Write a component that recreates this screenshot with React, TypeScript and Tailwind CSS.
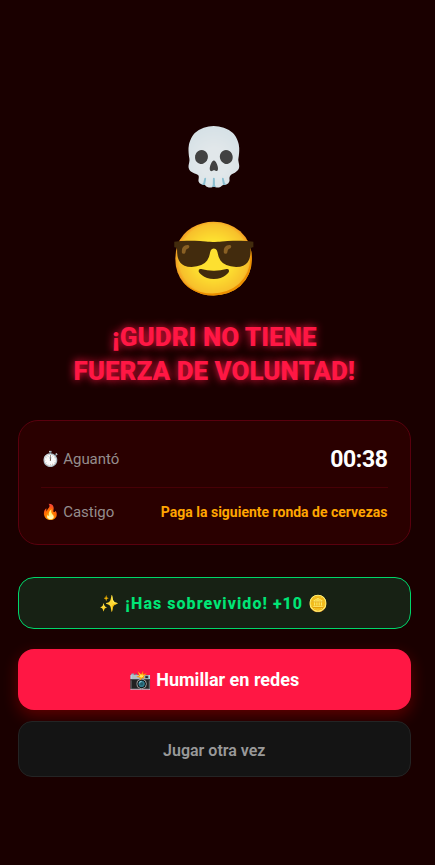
const Stats = () => (
  <section className="h-[125px] w-full rounded-[20px] border border-[#5a000e] bg-[#2a0000] px-[22.5px] py-[15px]">
    <div className="flex h-[52px] items-center justify-between border-b border-[#480006] pb-[5px]">
      <span className="text-[15px] leading-5 tracking-[-0.05px] text-[#958d8d]">⏱️ Aguantó</span>
      <span className="pt-px text-[23px] leading-7 font-bold tracking-[-0.4px]">00:38</span>
    </div>
    <div className="flex h-[48px] items-center justify-between">
      <span className="text-[15px] leading-5 tracking-[-0.05px] text-[#958d8d]">🔥 Castigo</span>
      <span className="text-[14px] leading-5 font-bold text-[#ffa500]">Paga la siguiente ronda de cervezas</span>
    </div>
  </section>
);

export default function App() {
  return (
    <main className="flex h-[865px] flex-col items-center bg-[#1a0000] pr-6 pl-[17.5px] font-['Roboto','Noto_Color_Emoji',sans-serif] text-white">
      <div className="mt-[121px] h-[72px] text-[56px] leading-[72px]">💀</div>
      <div className="mt-[22px] h-[90px] text-[72px] leading-[90px]">😎</div>
      <h1 className="mt-[15px] text-center text-[26px] leading-[34px] font-black whitespace-nowrap text-[#ff1744] [text-shadow:0_0_9px_#ff1744]">
        ¡GUDRI NO TIENE
        <br />
        FUERZA DE VOLUNTAD!
      </h1>
      <div className="mt-[32px] w-full">
        <Stats />
      </div>
      <div className="mt-[32px] flex h-[52px] w-full items-center justify-center rounded-[16px] border border-[#00d66a] bg-[#172114] pt-px text-[16px] font-extrabold tracking-[1.05px] text-[#00e676]">
        ✨ ¡Has sobrevivido! +10 🪙
      </div>
      <button className="mt-[20px] h-[61px] w-full rounded-[16px] bg-[#ff1744] text-[18px] font-bold shadow-[0_6px_16px_rgba(255,0,0,0.3)]">
        📸 Humillar en redes
      </button>
      <button className="z-10 mt-[11px] h-[56px] w-full rounded-[14px] border border-[#242424] bg-[#141414] pt-[3px] text-[16px] font-semibold text-[#999]">
        Jugar otra vez
      </button>
    </main>
  );
}
